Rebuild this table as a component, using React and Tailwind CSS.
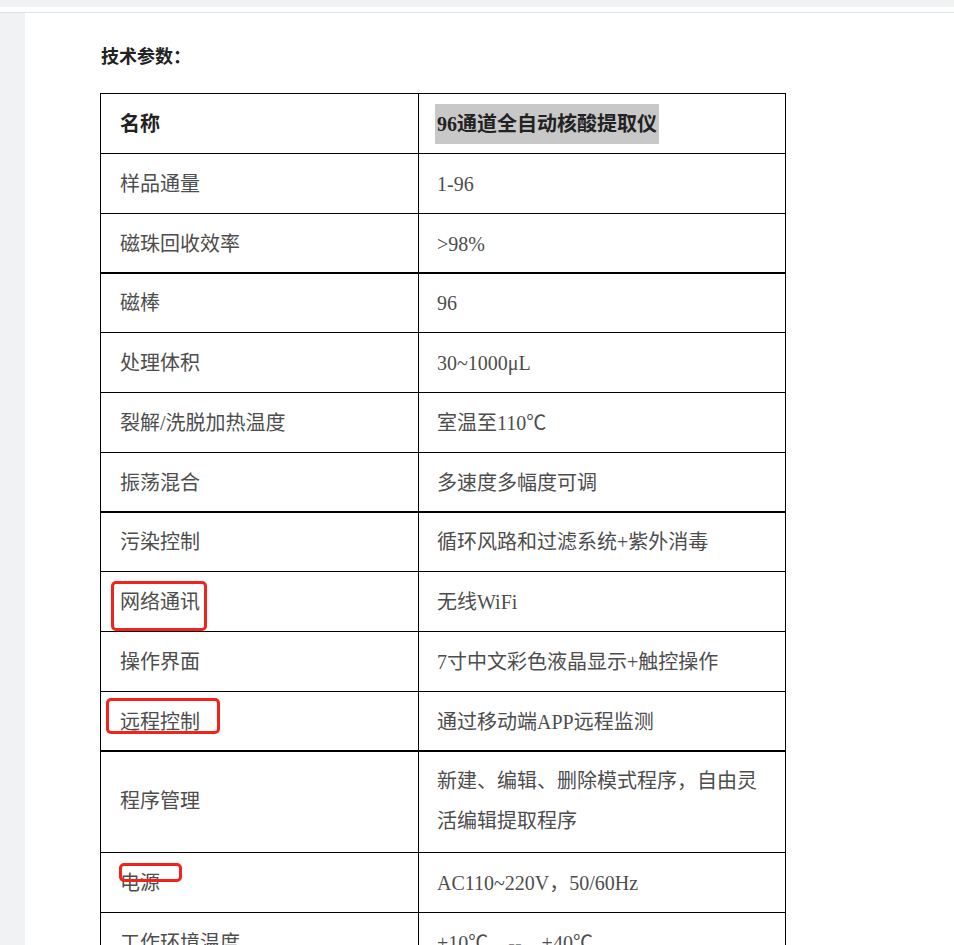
import React from 'react';

const rows = [
  { name: '样品通量', value: '1-96' },
  { name: '磁珠回收效率', value: '>98%' },
  { name: '磁棒', value: '96', thick: true },
  { name: '处理体积', value: '30~1000μL' },
  { name: '裂解/洗脱加热温度', value: '室温至110℃' },
  { name: '振荡混合', value: '多速度多幅度可调' },
  { name: '污染控制', value: '循环风路和过滤系统+紫外消毒', thick: true },
  { name: '网络通讯', value: '无线WiFi', mark: 'left-[10px] top-[9px] w-[96px] h-[50px]' },
  { name: '操作界面', value: '7寸中文彩色液晶显示+触控操作' },
  { name: '远程控制', value: '通过移动端APP远程监测', mark: 'left-[5px] top-[6px] w-[114px] h-[36px]' },
  { name: '程序管理', value: '新建、编辑、删除模式程序，自由灵活编辑提取程序', thick: true, tall: true },
  { name: '电源', value: 'AC110~220V，50/60Hz', mark: 'left-[18px] top-[10px] w-[63px] h-[19px]' },
  { name: '工作环境温度', value: '+10℃    --    +40℃' },
];

const font = { fontFamily: '"Liberation Serif", "Noto Sans CJK SC", serif' };

function Row({ row }) {
  const pad = `${row.thick ? 'pt-[9px]' : 'pt-[10px]'} ${row.tall ? 'pb-[11px]' : 'pb-[9px]'}`;
  return (
    <div className={`grid grid-cols-[318px_1fr] border-black ${row.thick ? '-mt-px border-t-2' : 'border-t'}`}>
      <div className={`relative flex items-center border-r border-black px-[19px] ${pad}`}>
        <span>{row.name}</span>
        {row.mark && (
          <div className={`absolute ${row.mark} rounded-[5px] border-[3px] border-[#f2231b]`} />
        )}
      </div>
      <div className={`px-[18px] whitespace-pre-wrap ${pad}`}>
        {row.value}
      </div>
    </div>
  );
}

export default function App() {
  return (
    <div className="h-[945px] overflow-hidden bg-white" style={font}>
      <div className="h-[7px] bg-[#f1f2f3]" />
      <div className="h-[5px] bg-white" />
      <div className="h-px bg-[#e0e0e0]" />
      <div className="flex h-[932px]">
        <div className="w-[25px] bg-[#f1f2f3]" />
        <div className="flex-1 bg-white pl-[75px] pt-[30px]">
          <h2 className="ml-px text-[18px] leading-[28px] font-bold text-[#222]">技术参数：</h2>
          <div className="mt-[22px] w-[686px] border-x border-b border-black text-[20px] leading-[40px] text-[#4d4d4d]">
            <div className="grid grid-cols-[318px_1fr] border-t border-black font-bold text-[#222]">
              <div className="border-r border-black px-[19px] pt-[10px] pb-[9px]">名称</div>
              <div className="px-[16px] pt-[10px] pb-[9px]">
                <span className="inline-block bg-[#c8c8c8] px-[2px]">96通道全自动核酸提取仪</span>
              </div>
            </div>
            {rows.map((r) => (
              <Row key={r.name} row={r} />
            ))}
          </div>
        </div>
      </div>
    </div>
  );
}
